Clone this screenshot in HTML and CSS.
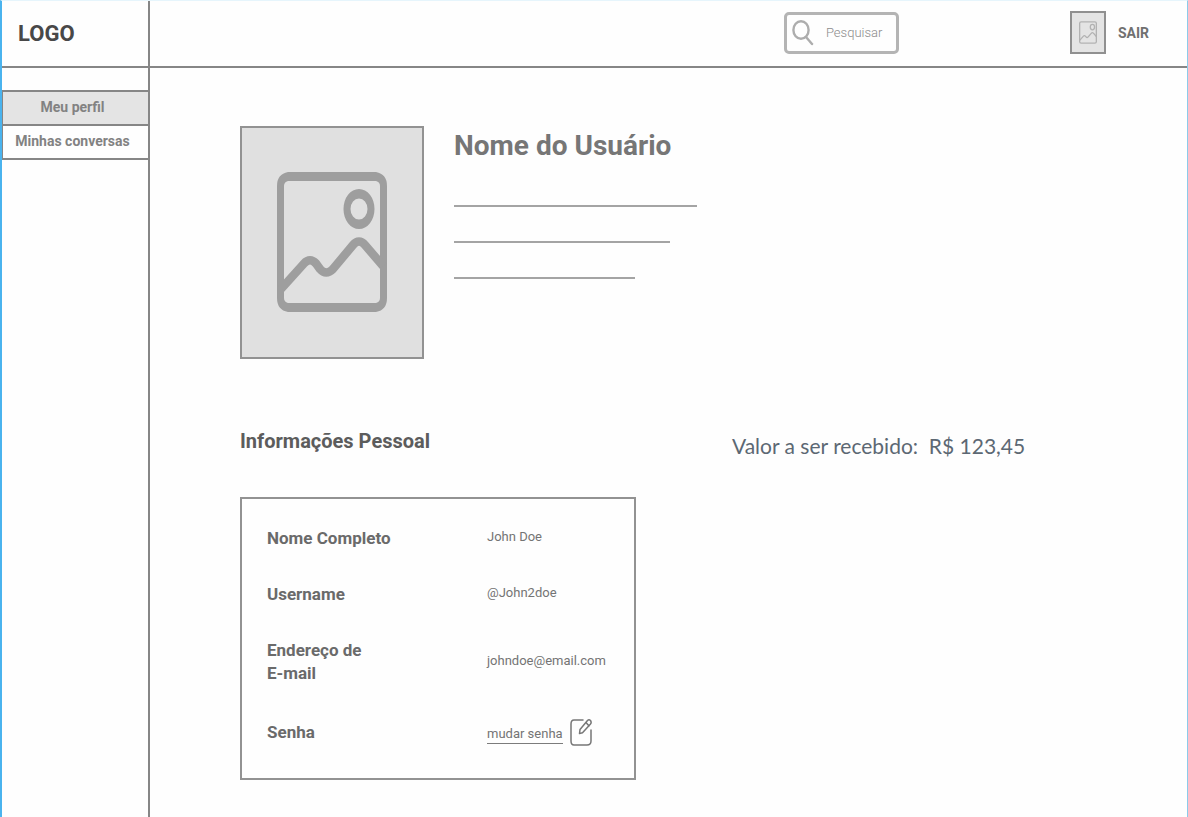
FILE: index.html
```html
<!DOCTYPE html>
<html lang="pt-BR">
<head>
<meta charset="utf-8">
<title>Meu perfil</title>
<link rel="stylesheet" href="styles.css">
</head>
<body>
<div class="page">
  <header class="topbar">
    <div class="logo">LOGO</div>
    <div class="topbar-tools">
      <label class="search">
        <svg class="search-icon" viewBox="0 0 22 26" fill="none" stroke="#adadad" stroke-width="2.4" stroke-linecap="round" aria-hidden="true"><ellipse cx="9" cy="10" rx="7.600" ry="8.800"/><path d="M14 17 20 24"/></svg>
        <input class="search-input" type="text" placeholder="Pesquisar" aria-label="Pesquisar">
      </label>
      <div class="account">
        <span class="avatar">
          <svg class="avatar-icon" viewBox="0 0 110 140" preserveAspectRatio="none" fill="none" stroke="#b2b2b2" stroke-width="8" aria-hidden="true"><rect x="4" y="5" width="102" height="130" rx="9"/><ellipse cx="82" cy="37" rx="13" ry="17"/><path d="M4 118 27 92Q33 85 39 92L43 97Q49 105 56 97L76 74Q82 67 88 74L106 94"/></svg>
        </span>
        <button class="logout" type="button">SAIR</button>
      </div>
    </div>
  </header>
  <nav class="sidebar">
    <a class="nav-item active" href="#perfil">Meu perfil</a>
    <a class="nav-item" href="#conversas">Minhas conversas</a>
  </nav>
  <main class="content">
    <section class="profile">
      <div class="photo">
        <svg class="photo-icon" viewBox="0 0 110 140" fill="none" aria-hidden="true"><path fill="#9e9e9e" fill-rule="evenodd" d="M11 0H99Q110 2 110 14V126Q110 138 99 140H11Q0 138 0 126V14Q0 2 11 0ZM11 9Q7 10 7 14V126Q7 130 11 131H99Q103 130 103 126V14Q103 10 99 9Z"/><path fill="#9e9e9e" fill-rule="evenodd" d="M82 17A15.500 20 0 0 1 82 57 15.500 20 0 0 1 82 17ZM82 26.500A8.500 10.500 0 0 0 82 47.500 8.500 10.500 0 0 0 82 26.500Z"/><path stroke="#9e9e9e" stroke-width="8.500" d="M4 117 27 91.500Q33 85 39 91.500L43 97Q49 104 56 97L76 73Q82 66 88 73L106 94"/></svg>
      </div>
      <div class="summary">
        <h1 class="name">Nome do Usuário</h1>
        <div class="line line-long"></div>
        <div class="line line-medium"></div>
        <div class="line line-short"></div>
      </div>
    </section>
    <section class="details">
      <h2 class="heading">Informações Pessoal</h2>
      <p class="amount">Valor a ser recebido:&nbsp; R$ 123,45</p>
      <dl class="card">
        <dt>Nome Completo</dt><dd>John Doe</dd>
        <dt>Username</dt><dd>@John2doe</dd>
        <dt>Endereço de<br>E-mail</dt><dd>johndoe@email.com</dd>
        <dt>Senha</dt>
        <dd class="password"><a class="change" href="#senha">mudar senha</a>
          <svg class="edit-icon" viewBox="0 0 24 28" fill="none" stroke="#777" stroke-width="1.500" stroke-linecap="round" stroke-linejoin="round" aria-hidden="true"><path d="M14 2H5Q2 2 2 6V23Q2 27 5 27H18Q22 27 22 23V12"/><path d="M10.500 15.500 11 11.500 18.500 2.500Q20 1 21.500 2.500 22.800 4.500 21.500 6L13.500 14.800ZM17 4.500 20 8"/></svg>
        </dd>
      </dl>
    </section>
  </main>
</div>
</body>
</html>
```
FILE: styles.css
```css
* { box-sizing: border-box; }
body {
  margin: 0;
  background: #fefefe;
  font-family: Roboto, "Liberation Sans", sans-serif;
  color: #707070;
}
a { color: inherit; text-decoration: none; }
.page {
  display: grid;
  grid-template-columns: 148px minmax(0, 1fr);
  grid-template-rows: auto 1fr;
  min-height: 100vh;
  border-left: 2px solid #4ab3ee;
  border-right: 1px solid #8ccbea;
  border-top: 1px solid #e6f5fc;
}
.topbar {
  grid-column: 1 / -1;
  display: grid;
  grid-template-columns: subgrid;
  height: 67px;
  border-bottom: 2px solid #868686;
}
.logo {
  display: flex;
  align-items: center;
  padding-left: 16px;
  border-right: 2px solid #868686;
  font-size: 22px;
  font-weight: 700;
  color: #484848;
}
.topbar-tools {
  display: flex;
  align-items: center;
  justify-content: flex-end;
  gap: 171px;
  padding: 0 38px 2px 0;
}
.search {
  display: flex;
  align-items: center;
  gap: 12px;
  width: 115px;
  height: 42px;
  padding: 0 5px;
  border: 3px solid #b4b4b4;
  border-radius: 5px;
}
.search-icon { flex: none; width: 22px; height: 26px; }
.search-input {
  width: 100%;
  min-width: 0;
  padding: 0;
  border: 0;
  outline: 0;
  background: none;
  font: 300 13px Roboto, "Liberation Sans", sans-serif;
  color: #707070;
}
.search-input::placeholder { color: #8c8c8c; opacity: 1; }
.account { display: flex; align-items: center; gap: 12px; }
.avatar {
  display: grid;
  place-items: center;
  width: 36px;
  height: 43px;
  border: 2px solid #909090;
  background: #e4e4e4;
}
.avatar-icon { width: 18px; height: 23px; }
.logout {
  padding: 0;
  border: 0;
  background: none;
  font: 700 14px Roboto, "Liberation Sans", sans-serif;
  color: #707070;
}
.sidebar { padding-top: 22px; border-right: 2px solid #868686; }
.nav-item {
  display: block;
  height: 36px;
  margin-right: -2px;
  padding-right: 6px;
  border: 2px solid #868686;
  border-left-width: 1px;
  font-size: 14px;
  font-weight: 700;
  line-height: 31px;
  text-align: center;
  color: #828282;
}
.nav-item + .nav-item { margin-top: -2px; }
.active { background: #e4e4e4; }
.content { padding: 58px 0 37px 90px; }
.profile { display: flex; gap: 30px; }
.photo {
  display: grid;
  justify-content: center;
  padding-top: 44px;
  width: 184px;
  height: 233px;
  border: 2px solid #929292;
  background: #e0e0e0;
}
.photo-icon { width: 110px; height: 140px; }
.summary { display: grid; align-content: start; gap: 34px; }
.name { margin: 0 0 5px; font-size: 28px; line-height: 40px; color: #767676; }
.line { height: 2px; background: #a4a4a4; }
.line-long { width: 243px; }
.line-medium { width: 216px; }
.line-short { width: 181px; }
.details {
  display: grid;
  grid-template-columns: 396fr 455fr;
  column-gap: 96px;
  padding-top: 66px;
}
.heading { margin: 0; font-size: 20px; line-height: 32px; color: #5c5c5c; }
.amount {
  margin: 0;
  padding-top: 5px;
  font: 21px/32px Lato, sans-serif;
  color: #5c6873;
}
.card {
  display: grid;
  grid-template-columns: 220px minmax(0, 1fr);
  grid-template-rows: 56px 56px 80px 60px;
  margin: 35px 0 0;
  padding: 11px 0 16px 25px;
  border: 2px solid #929292;
}
.card dt { align-self: center; font-size: 17px; font-weight: 700; line-height: 23px; color: #6a6a6a; }
.card dd { align-self: center; margin: 0; padding-bottom: 2px; font-size: 13px; line-height: 20px; color: #747474; }
.card .password { display: flex; align-items: flex-end; gap: 6px; padding: 0; }
.change { border-bottom: 1px solid #7c7c7c; margin-bottom: 2px; line-height: 18px; }
.edit-icon { width: 24px; height: 28px; }
```
